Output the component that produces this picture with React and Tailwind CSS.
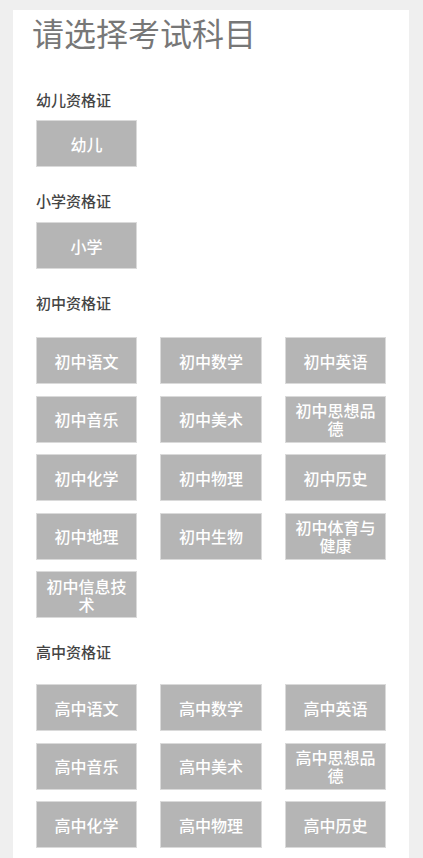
const sections = [
  { title: "幼儿资格证", gap: "mt-[10px]", items: ["幼儿"] },
  { title: "小学资格证", gap: "mt-[11px]", items: ["小学"] },
  {
    title: "初中资格证",
    gap: "mt-[24px]",
    items: [
      "初中语文", "初中数学", "初中英语",
      "初中音乐", "初中美术", "初中思想品德",
      "初中化学", "初中物理", "初中历史",
      "初中地理", "初中生物", "初中体育与健康",
      "初中信息技术",
    ],
  },
  {
    title: "高中资格证",
    gap: "mt-[22px]",
    items: [
      "高中语文", "高中数学", "高中英语",
      "高中音乐", "高中美术", "高中思想品德",
      "高中化学", "高中物理", "高中历史",
    ],
  },
];

function SubjectButton({ label }) {
  return (
    <button className="h-[47px] w-full flex items-center justify-center px-[8px] bg-[#b5b5b5] border border-[#dadada] text-white text-[16px] leading-[18px] font-medium text-center">
      {label}
    </button>
  );
}

export default function App() {
  return (
    <div
      className="min-h-[858px] bg-[#efefef] pt-[10px]"
      style={{ fontFamily: '"Noto Sans CJK SC", "Noto Sans", sans-serif' }}
    >
      <div className="ml-[13px] w-[396px] min-h-[848px] bg-white">
        <h1 className="pl-[19px] pt-[2px] text-[32px] leading-[40px] text-[#777777] font-normal">
          请选择考试科目
        </h1>

        <div className="pl-[23px] pt-[14px]">
          {sections.map((s) => (
            <div key={s.title} className="pt-[24px]">
              <p className="text-[15px] leading-[20px] font-medium text-[#444444]">{s.title}</p>
              <div
                className={
                  s.items.length > 1
                    ? `${s.gap} grid grid-cols-[101px_102px_101px] gap-x-[23px] gap-y-[11.5px]`
                    : `${s.gap} grid grid-cols-[101px] gap-x-[23px]`
                }
              >
                {s.items.map((it) => (
                  <SubjectButton key={it} label={it} />
                ))}
              </div>
            </div>
          ))}
        </div>
      </div>
    </div>
  );
}
